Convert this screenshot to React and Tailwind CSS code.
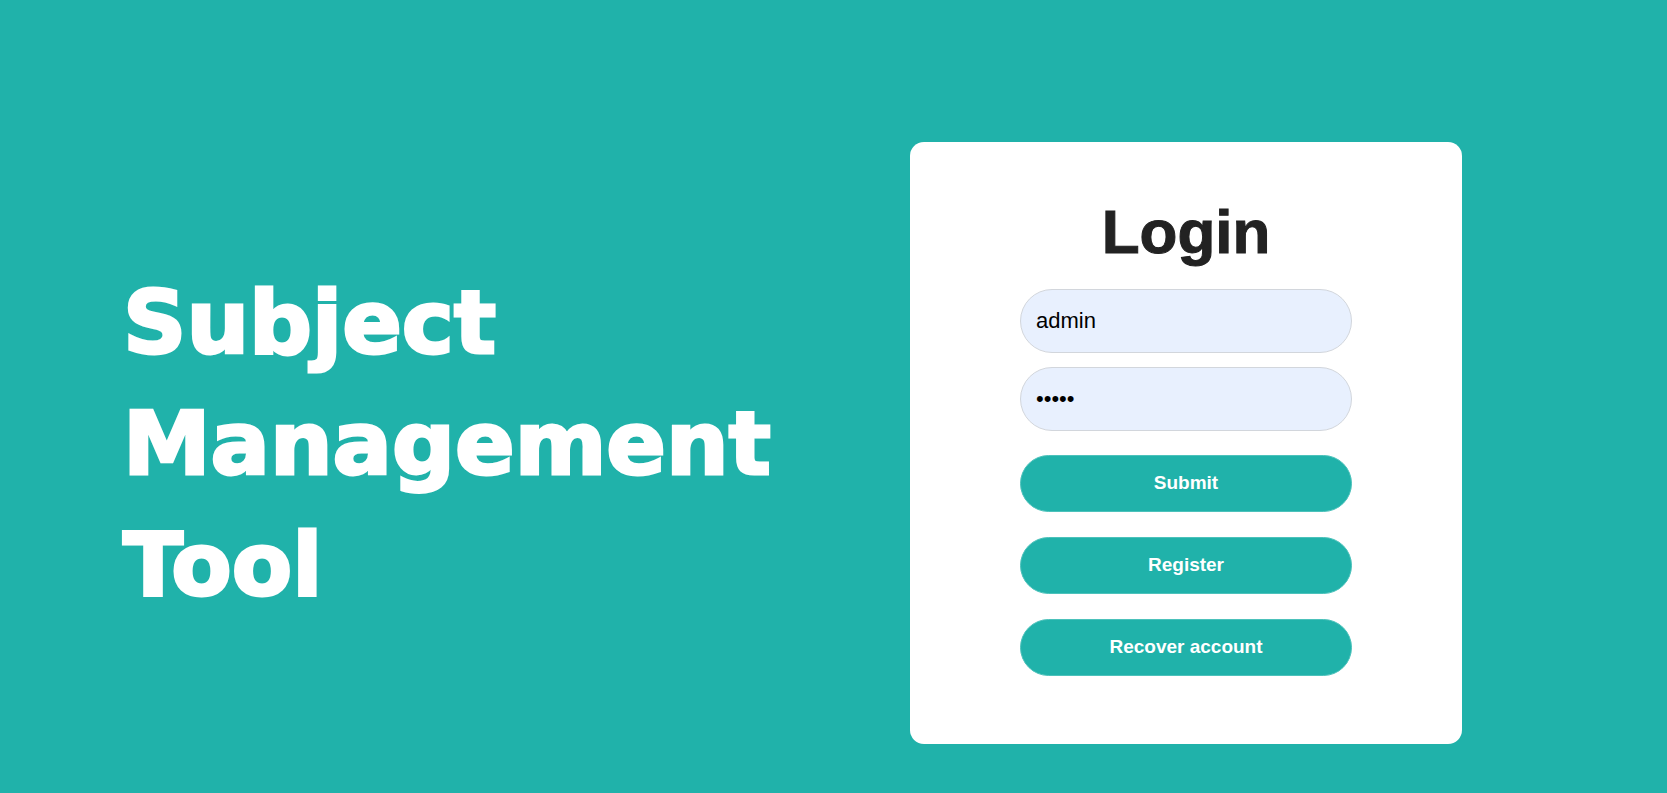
import { useState } from 'react';

export default function App() {
    const [username, setUsername] = useState('admin');
    const [password, setPassword] = useState('admin');

    return (
        <div className="h-screen w-full bg-[#20b2aa] flex items-center pt-[93px] pl-[123px] overflow-hidden">
            {/* Title */}
            <div className="w-[787px] shrink-0">
                <h1 className="text-white text-[88px] leading-[121px] font-bold font-['DejaVu_Sans',sans-serif] [-webkit-text-stroke:3px_white]">
                    Subject
                    <br />
                    Management
                    <br />
                    Tool
                </h1>
            </div>

            {/* Login card */}
            <div className="w-[552px] h-[602px] shrink-0 bg-white rounded-[14px] flex flex-col items-center pt-[55px] font-['Liberation_Sans',Arial,sans-serif]">
                <h2 className="text-[62px] leading-[69px] font-bold text-[#222222] [-webkit-text-stroke:1px_#222222]">Login</h2>

                <form className="flex flex-col items-center mt-[23px]" onSubmit={(e) => e.preventDefault()}>
                    <input
                        type="text"
                        value={username}
                        onChange={(e) => setUsername(e.target.value)}
                        className="w-[332px] h-[64px] rounded-full bg-[#e8f0fe] border border-[#d2d6dc] pl-[15px] text-[22px] text-black outline-none"
                    />
                    <input
                        type="password"
                        value={password}
                        onChange={(e) => setPassword(e.target.value)}
                        className="w-[332px] h-[64px] mt-[14px] rounded-full bg-[#e8f0fe] border border-[#d2d6dc] pl-[15px] text-[22px] text-black outline-none"
                    />

                    <button
                        type="submit"
                        className="w-[332px] h-[57px] mt-[24px] rounded-full bg-[#20b2aa] border border-[#4cc2bb] text-white font-bold text-[19px]"
                    >
                        Submit
                    </button>
                    <button
                        type="button"
                        className="w-[332px] h-[57px] mt-[25px] rounded-full bg-[#20b2aa] border border-[#4cc2bb] text-white font-bold text-[19px]"
                    >
                        Register
                    </button>
                    <button
                        type="button"
                        className="w-[332px] h-[57px] mt-[25px] rounded-full bg-[#20b2aa] border border-[#4cc2bb] text-white font-bold text-[19px]"
                    >
                        Recover account
                    </button>
                </form>
            </div>
        </div>
    );
}
